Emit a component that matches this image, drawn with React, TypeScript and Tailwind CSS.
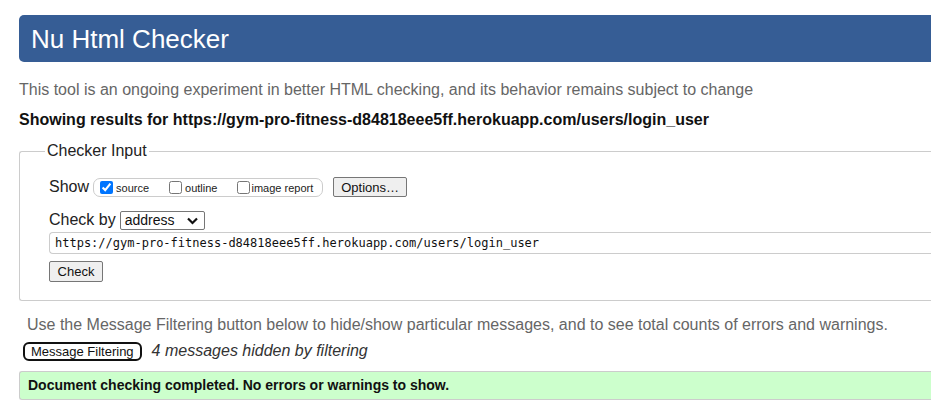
import React from "react";

const App = () => {
  const url = "https://gym-pro-fitness-d84818eee5ff.herokuapp.com/users/login_user";

  return (
    <div className="w-[939px] h-[409px] bg-white overflow-hidden font-['Liberation_Sans',Arial,sans-serif]">
      <div className="ml-[19px] w-[912px]">
        {/* header */}
        <div className="mt-[15px] h-[47px] bg-[#365d95] rounded-l-[5px] flex items-center pl-[12px]">
          <h1 className="text-[26px] leading-none text-white">Nu Html Checker</h1>
        </div>

        <p className="mt-[18px] text-[16px] leading-[19px] text-[#666]">
          This tool is an ongoing experiment in better HTML checking, and its behavior remains subject to change
        </p>
        <p className="mt-[11px] text-[16px] leading-[19px] font-bold text-[#111]">
          Showing results for {url}
        </p>

        {/* checker input */}
        <fieldset className="mt-[13px] h-[159px] border border-r-0 border-[#ccc] rounded-l-[3px] pl-[29px] pt-[8px]">
          <legend className="-ml-[4px] px-[2px] text-[16px] leading-[18px] text-[#222]">Checker Input</legend>

          <div className="flex items-center h-[22px] mt-[8px]">
            <span className="text-[16px] text-[#222] mr-[4px]">Show</span>
            <div className="flex items-center h-[19px] border border-[#ccc] rounded-[7px] pl-[6px] pr-[9px] text-[11px] text-[#222]">
              <label className="flex items-center">
                <input type="checkbox" defaultChecked className="w-[13px] h-[13px] m-0 accent-[#0075ff]" />
                <span className="ml-[3px] mt-[2px]">source</span>
              </label>
              <label className="flex items-center ml-[20px]">
                <input type="checkbox" className="w-[13px] h-[13px] m-0" />
                <span className="ml-[3px] mt-[2px]">outline</span>
              </label>
              <label className="flex items-center ml-[20px]">
                <input type="checkbox" className="w-[13px] h-[13px] m-0" />
                <span className="ml-[1px] mt-[2px]">image report</span>
              </label>
            </div>
            <button className="ml-[10px] h-[20px] px-[7px] border border-[#767676] rounded-[2px] bg-[#efefef] text-[13px] leading-none text-[#111]">
              Options…
            </button>
          </div>

          <div className="flex items-center h-[20px] mt-[12px]">
            <span className="text-[16px] text-[#222] mr-[4px]">Check by</span>
            <div className="relative w-[85px] h-[19px] border border-[#767676] rounded-[2px] flex items-center pl-[4px] text-[14px] text-[#111]">
              address
              <svg className="absolute right-[6px] top-[5px]" width="11" height="8" viewBox="0 0 11 8">
                <path d="M1 1.5 L5.5 6 L10 1.5" fill="none" stroke="#111" strokeWidth="2.2" />
              </svg>
            </div>
          </div>

          <div className="mt-[2px] h-[22px] border border-r-0 border-[#ccc] rounded-l-[4px] flex items-center pl-[5px] font-['DejaVu_Sans_Mono',monospace] text-[12px] text-[#111]">
            {url}
          </div>

          <button className="mt-[7px] h-[21px] w-[54px] border border-[#767676] rounded-[2px] bg-[#efefef] text-[13px] leading-none text-[#111]">
            Check
          </button>
        </fieldset>

        <p className="mt-[14px] ml-[8px] text-[16px] leading-[19px] text-[#666]">
          Use the Message Filtering button below to hide/show particular messages, and to see total counts of errors and warnings.
        </p>

        <div className="mt-[5px] flex items-center ml-[4px]">
          <button className="h-[19px] px-[6px] border-2 border-[#111] rounded-[6px] bg-white text-[13px] leading-none text-[#111]">
            Message Filtering
          </button>
          <span className="ml-[10px] text-[16px] italic text-[#333]">4 messages hidden by filtering</span>
        </div>

        <div className="mt-[8px] h-[29px] bg-[#ccffcc] border border-r-0 border-[#ccc] rounded-l-[3px] flex items-center pl-[8px] text-[14px] font-bold text-[#111]">
          Document checking completed. No errors or warnings to show.
        </div>
      </div>
    </div>
  );
};

export default App;
